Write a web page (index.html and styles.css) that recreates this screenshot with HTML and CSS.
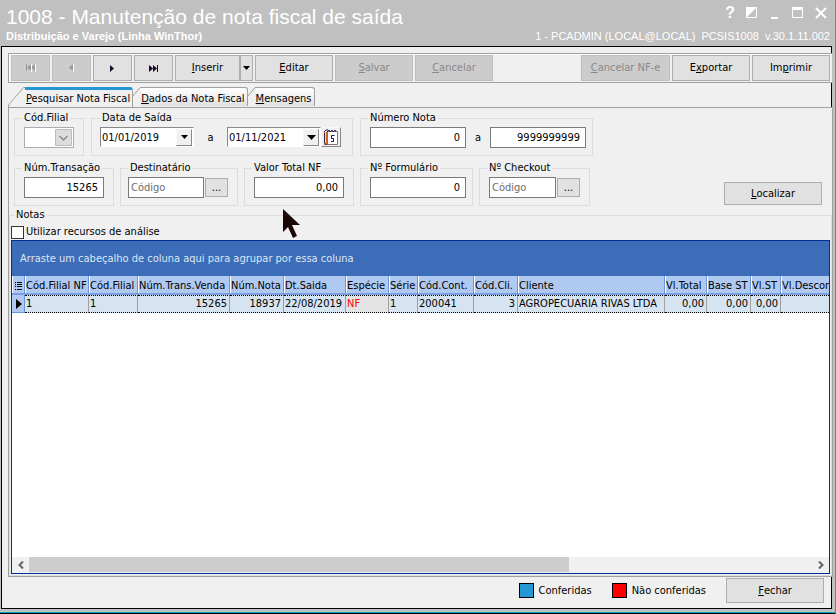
FILE: index.html
```html
<!DOCTYPE html>
<html lang="pt-BR">
<head>
  <meta charset="UTF-8">
  <title>1008 - Manutenção de nota fiscal de saída</title>
  <link rel="stylesheet" href="styles.css">
</head>
<body>
  <header class="titulo">
    <div class="linha">
      <h1>1008 - Manutenção de nota fiscal de saída</h1>
      <div class="janela">
        <button aria-label="Ajuda" class="ajuda">?</button>
        <button aria-label="Cores"><svg width="12" height="12"><path d="M0.500 0.500H10.500V10.500H0.500Z" fill="none" stroke="#fff"/><path d="M0 0H11L0 11Z" fill="#fff"/></svg></button>
        <button aria-label="Minimizar"><svg width="12" height="12"><path d="M2 10H9V12H2Z" fill="#fff"/></svg></button>
        <button aria-label="Maximizar"><svg width="12" height="12"><path d="M0 0H11V11H0ZM1 3V10H10V3Z" fill="#fff" fill-rule="evenodd"/></svg></button>
        <button aria-label="Fechar janela"><svg width="12" height="12"><path d="M1 1L11 11M11 1L1 11" stroke="#fff" stroke-width="2"/></svg></button>
      </div>
    </div>
    <div class="linha sub">
      <strong>Distribuição e Varejo (Linha WinThor)</strong>
      <div class="sessao"><span>1 - PCADMIN (LOCAL@LOCAL)</span><span>PCSIS1008</span><span>v.30.1.11.002</span></div>
    </div>
  </header>

  <main class="quadro">
    <div class="barra">
      <button class="nav" disabled aria-label="Primeiro"><svg width="10" height="8"><path d="M0 0H1V7H0ZM5 0V7L1 3.500ZM9 0V7L5 3.500Z" fill="#999"/><path d="M5.500 0V8M9.500 0V8" stroke="#fff"/></svg></button>
      <button class="nav" disabled aria-label="Anterior"><svg width="6" height="8"><path d="M4 0V7L0 3.500Z" fill="#999"/><path d="M4.500 0V8" stroke="#fff"/></svg></button>
      <button class="nav" aria-label="Próximo"><svg width="5" height="7"><path d="M0 0V7L4 3.500Z" fill="#1b0a2b"/></svg></button>
      <button class="nav" aria-label="Último"><svg width="10" height="7"><path d="M0 0V7L4 3.500ZM4 0V7L8 3.500ZM8 0H9V7H8Z" fill="#1b0a2b"/></svg></button>
      <div class="duplo">
        <button class="inserir"><u>I</u>nserir</button><button class="seta" aria-label="Opções de inserir"><svg width="7" height="4"><path d="M0 0H7L3.500 4Z"/></svg></button>
      </div>
      <button><u>E</u>ditar</button>
      <button disabled><u>S</u>alvar</button>
      <button disabled><u>C</u>ancelar</button>
      <button class="nfe" disabled><u>C</u>ancelar NF-e</button>
      <button>E<u>x</u>portar</button>
      <button>Im<u>p</u>rimir</button>
    </div>

    <div class="abas" role="tablist">
      <button class="aba ativa" role="tab" aria-selected="true"><svg width="17" height="20"><path d="M0 20V18L15 0H17V20Z" fill="#f0f0f0"/><path d="M0.500 20V18L15.500 0.500H17" fill="none" stroke="#a0a0a0"/></svg><span><u>P</u>esquisar Nota Fiscal</span></button>
      <button class="aba" role="tab" aria-selected="false"><svg width="8" height="20"><path d="M0 9L7 0.500H8" fill="none" stroke="#a0a0a0"/></svg><span><u>D</u>ados da Nota Fiscal</span></button>
      <button class="aba" role="tab" aria-selected="false"><svg width="8" height="20"><path d="M0 9L7 0.500H8" fill="none" stroke="#a0a0a0"/></svg><span><u>M</u>ensagens</span></button>
    </div>

    <section class="painel">
      <div class="filtros">
        <div class="grupos">
          <div class="grupo-linha topo">
            <fieldset>
              <legend>Cód.Filial</legend>
              <div class="campos">
                <div class="combo"><select aria-label="Cód.Filial" disabled><option></option></select><svg width="17" height="17"><path d="M0.500 0.500H16.500V16.500H0.500Z" fill="#ddd" stroke="#bbb"/><path d="M4.500 7L8.500 11L12.500 7" fill="none" stroke="#888" stroke-width="1.500"/></svg></div>
              </div>
            </fieldset>
            <fieldset class="datas">
              <legend>Data de Saída</legend>
              <div class="campos">
                <div class="data"><input type="text" value="01/01/2019" aria-label="Data inicial"><button aria-label="Abrir data inicial"><svg width="7" height="4"><path d="M0 0H7L3.500 4Z"/></svg></button></div>
                <span class="ate">a</span>
                <div class="data"><input type="text" value="01/11/2021" aria-label="Data final"><button aria-label="Abrir data final"><svg width="9" height="5"><path d="M0 0H9L4.500 5Z"/></svg></button></div>
                <button class="calendario" aria-label="Calendário"><svg width="16" height="17"><path d="M1 3H5V16H1Z" fill="#d2691e"/><path d="M2.500 3V15" stroke="#ffd0a0"/><path d="M4.500 2.500H14.500V15.500H4.500Z" fill="#fff" stroke="#777"/><path d="M4 3L6 1L7 3L9 1L10 3L12 1L13 3M1.500 4V14L4 16M1 3L3 1H5" fill="none" stroke="#302050"/><path d="M11.500 6.500H8.500V9.500H10.500V12.500H8" fill="none" stroke="#201040"/></svg></button>
              </div>
            </fieldset>
            <fieldset class="numero">
              <legend>Número Nota</legend>
              <div class="campos">
                <input class="medio" type="text" value="0" aria-label="Número inicial">
                <span class="ate">a</span>
                <input class="medio" type="text" value="9999999999" aria-label="Número final">
              </div>
            </fieldset>
          </div>
          <div class="grupo-linha">
            <fieldset>
              <legend>Núm.Transação</legend>
              <div class="campos"><input class="curto" type="text" value="15265" aria-label="Núm.Transação"></div>
            </fieldset>
            <fieldset class="destino">
              <legend>Destinatário</legend>
              <div class="campos"><input class="codigo" type="text" placeholder="Código" aria-label="Destinatário"><button class="busca" aria-label="Buscar destinatário">...</button></div>
            </fieldset>
            <fieldset>
              <legend>Valor Total NF</legend>
              <div class="campos"><input class="valor" type="text" value="0,00" aria-label="Valor Total NF"></div>
            </fieldset>
            <fieldset class="numero">
              <legend>Nº Formulário</legend>
              <div class="campos"><input class="medio" type="text" value="0" aria-label="Nº Formulário"></div>
            </fieldset>
            <fieldset>
              <legend>Nº Checkout</legend>
              <div class="campos"><input class="codigo menor" type="text" placeholder="Código" aria-label="Nº Checkout"><button class="busca" aria-label="Buscar checkout">...</button></div>
            </fieldset>
          </div>
        </div>
        <button class="localizar"><u>L</u>ocalizar</button>
      </div>

      <fieldset class="notas">
        <legend>Notas</legend>
        <label class="analise"><input type="checkbox"> Utilizar recursos de análise</label>
        <div class="grade">
          <div class="agrupar">Arraste um cabeçalho de coluna aqui para agrupar por essa coluna</div>
          <div class="dados">
            <table>
              <colgroup>
                <col class="c13"><col class="c64"><col class="c49"><col class="c92"><col class="c54"><col class="c62"><col class="c43"><col class="c29"><col class="c56"><col class="c44"><col class="c147"><col class="c42"><col class="c44"><col class="c30"><col>
              </colgroup>
              <thead>
                <tr>
                  <th><svg width="8" height="10"><path d="M0 1.500H1M2 1.500H7M0 3.500H1M2 3.500H7M0 5.500H1M2 5.500H7M0 8.500H1M2 8.500H7" stroke="#000"/></svg></th>
                  <th>Cód.Filial NF</th><th>Cód.Filial</th><th>Núm.Trans.Venda</th><th>Núm.Nota</th><th>Dt.Saida</th><th>Espécie</th><th>Série</th><th>Cód.Cont.</th><th>Cód.Cli.</th><th>Cliente</th><th>Vl.Total</th><th>Base ST</th><th>Vl.ST</th><th>Vl.Desconto</th>
                </tr>
              </thead>
              <tbody>
                <tr>
                  <td class="marca"><svg width="6" height="10"><path d="M0 0L6 5L0 10Z"/></svg></td>
                  <td>1</td><td>1</td><td class="num">15265</td><td class="num">18937</td><td>22/08/2019</td><td class="especie">NF</td><td>1</td><td>200041</td><td class="num">3</td><td>AGROPECUARIA RIVAS LTDA</td><td class="num">0,00</td><td class="num">0,00</td><td class="num">0,00</td><td></td>
                </tr>
              </tbody>
            </table>
          </div>
          <div class="rolagem">
            <button aria-label="Rolar à esquerda"><svg width="6" height="8"><path d="M5 0.500L1.500 4L5 7.500" fill="none" stroke="#666" stroke-width="2"/></svg></button>
            <div class="trilho"><div class="polegar"></div></div>
            <button aria-label="Rolar à direita"><svg width="6" height="8"><path d="M1 0.500L4.500 4L1 7.500" fill="none" stroke="#666" stroke-width="2"/></svg></button>
          </div>
        </div>
      </fieldset>
    </section>

    <footer class="rodape">
      <span class="legenda"><i class="azul"></i>Conferidas</span>
      <span class="legenda"><i class="vermelho"></i>Não conferidas</span>
      <button class="fechar"><u>F</u>echar</button>
    </footer>
  </main>

  <svg class="cursor" width="18" height="30"><path d="M0 0V23L5 18L10 29L14 27L9 16H17Z" fill="#1a0505"/></svg>
</body>
</html>
```
FILE: styles.css
```css
* {
  box-sizing: border-box;
}

body {
  margin: 0;
  height: 100vh;
  display: flex;
  flex-direction: column;
  background: #c0c0c0;
  border-right: 1px solid #18a8b8;
  border-bottom: 1px solid #000;
  box-shadow: inset 0 -1px #00a8c0;
  font: 11px/14px Tahoma, "DejaVu Sans Condensed", sans-serif;
  color: #000;
  overflow: hidden;
}

button, input, select {
  font: inherit;
  color: inherit;
  margin: 0;
}

button {
  display: flex;
  align-items: center;
  justify-content: center;
  padding: 0;
  background: #e1e1e1;
  border: 1px solid #adadad;
  white-space: pre;
}

button:disabled {
  background: #ccc;
  border-color: #bfbfbf;
  color: #888;
}

svg {
  display: block;
  flex: none;
}

/* barra de titulo */
.titulo {
  height: 46px;
  padding: 5px 5px 0 6px;
  color: #fff;
  font-family: "Liberation Sans", Arial, sans-serif;
}

.linha {
  display: flex;
  justify-content: space-between;
}

h1 {
  margin: 0;
  font-size: 21px;
  line-height: 24px;
  font-weight: normal;
}

.janela {
  display: flex;
  align-items: center;
  gap: 11px;
  height: 16px;
  padding-right: 3px;
}

.janela button {
  background: none;
  border: 0;
}

.janela .ajuda {
  font-size: 16px;
  font-weight: bold;
}

.sub {
  font-size: 11px;
}

.sessao {
  display: flex;
  gap: 6px;
}

/* quadro principal */
.quadro {
  flex: 1;
  min-height: 0;
  display: flex;
  flex-direction: column;
  margin: 0 3px 4px 1px;
  border: 1px solid #000;
  padding: 6px 0 0 6px;
  background: #f0f0f0;
}

.barra {
  display: flex;
  gap: 2px;
  height: 30px;
  margin-right: -1px;
  padding: 1px 2px;
  border: 1px solid #a0a0a0;
  border-right: 0;
  background: #f0f0f0;
  box-shadow: inset 1px 1px #fff;
}

.barra button {
  width: 78px;
  height: 26px;
}

.barra .nav {
  width: 39px;
}

.duplo {
  display: flex;
}

.barra .inserir {
  width: 65px;
}

.barra .seta {
  width: 13px;
}

.barra .nfe {
  width: 89px;
  margin-left: auto;
}

/* abas */
.abas {
  display: flex;
  height: 20px;
  margin-top: 4px;
}

.aba {
  height: 19px;
  border: 0;
  background: none;
  align-items: stretch;
}

.aba span {
  padding: 4px 2px 0 0;
  border: 1px solid #a0a0a0;
  border-left: 0;
  border-bottom: 0;
  border-radius: 0 3px 0 0;
  background: linear-gradient(#fff, #e0e0e0);
}

.aba.ativa {
  position: relative;
  height: 20px;
}

.aba.ativa span {
  padding: 2px 2px 0 1px;
  border-top: 3px solid #2497d4;
  background: #f0f0f0;
}

/* filtros */
.painel {
  flex: 1;
  min-height: 0;
  display: flex;
  flex-direction: column;
  margin-right: -2px;
  border: 1px solid #a0a0a0;
  background: #f0f0f0;
}

.filtros {
  display: flex;
  justify-content: space-between;
  align-items: flex-end;
  padding: 3px 10px 0 5px;
}

.grupos {
  display: flex;
  flex-direction: column;
  gap: 5px;
}

.grupo-linha {
  display: flex;
  gap: 6px;
}

.topo {
  gap: 7px;
}

fieldset {
  min-width: 0;
  height: 45px;
  margin: 0;
  padding: 0 9px;
  border: 1px solid #dcdcdc;
}

legend {
  height: 14px;
  margin-left: -2px;
  padding: 0 2px;
  white-space: nowrap;
}

.datas {
  width: 262px;
  padding-left: 8px;
}

.datas legend, .destino legend {
  margin-left: 0;
}

.destino {
  padding-left: 7px;
}

.numero {
  padding-right: 6px;
}

.campos {
  display: flex;
  align-items: flex-start;
  margin-top: 2px;
}

.campos input {
  height: 21px;
  padding: 0 5px;
  border: 1px solid #7a7a7a;
  background: #fff;
  text-align: right;
}

.campos .curto {
  width: 80px;
}

.campos .valor {
  width: 90px;
}

.campos .medio {
  width: 96px;
}

.campos .codigo {
  width: 76px;
  padding: 0 2px;
  text-align: left;
}

.campos .menor {
  width: 67px;
}

::placeholder {
  color: #6d6d6d;
}

.busca {
  width: 23px;
  height: 19px;
  margin: 1px 0 0 1px;
}

.combo {
  display: flex;
  align-items: center;
  width: 50px;
  height: 21px;
  padding-right: 1px;
  border: 1px solid #adadad;
  background: #fff;
}

.combo select {
  flex: 1;
  min-width: 0;
  border: 0;
  background: none;
  appearance: none;
}

.data {
  display: flex;
  align-items: center;
  width: 94px;
  height: 20px;
  padding-right: 1px;
  border: 1px solid #fff;
  border-top-color: #888;
  border-left-color: #888;
  background: #fff;
}

.campos .data input {
  flex: 1;
  min-width: 0;
  height: 18px;
  padding: 0 1px;
  border: 0;
  text-align: left;
}

.data button, .calendario {
  width: 16px;
  height: 17px;
  background: #f0f0f0;
  border-color: #f8f8f8 #888 #888 #f8f8f8;
}

.calendario {
  width: 20px;
  height: 20px;
}

.ate {
  width: 24px;
  line-height: 21px;
  text-align: center;
}

.datas .ate {
  width: 33px;
}

.localizar {
  width: 98px;
  height: 23px;
  margin-bottom: 1px;
}

/* notas */
.notas {
  display: flex;
  flex-direction: column;
  flex: 1;
  min-height: 0;
  height: auto;
  margin: 2px 0 0;
  padding: 0 1px 1px;
}

.notas legend {
  margin-left: 3px;
}

.analise {
  display: flex;
  align-items: center;
  gap: 2px;
  height: 14px;
  margin: 3px 0 1px;
}

.analise input {
  appearance: none;
  width: 13px;
  height: 13px;
  margin: 0;
  border: 1px solid #333;
  background: #fff;
}

.grade {
  flex: 1;
  min-height: 0;
  display: flex;
  flex-direction: column;
  border: 1px solid #002d96;
  background: #fff;
}

.agrupar {
  height: 35px;
  padding-left: 8px;
  line-height: 36px;
  background: #3d6db8;
  color: #dce6f5;
}

.dados {
  flex: 1;
  overflow: hidden;
}

table {
  width: 100%;
  table-layout: fixed;
  border-collapse: separate;
  border-spacing: 0;
}

th, td {
  padding: 0 1px;
  overflow: hidden;
  white-space: nowrap;
  text-align: left;
  font-weight: normal;
}

th {
  height: 19px;
  padding-top: 2px;
  border-right: 1px solid #6a94d8;
  border-bottom: 2px solid #7ba0e0;
  box-shadow: inset 1px 0 #fff;
  background: #b0c9f0;
}

td {
  height: 18px;
  border-right: 1px solid #a0a0a0;
  border-top: 1px dotted #000;
  border-bottom: 1px dotted #000;
  background: #d6e4f2;
}

th:first-child {
  padding-left: 3px;
}

.num {
  padding-right: 2px;
  text-align: right;
}

.marca {
  padding-left: 4px;
  border-top: 0;
  border-bottom: 1px solid #6a94d8;
  border-right-color: #6a94d8;
  background: #b0c9f0;
}

.especie {
  background: #e4e4e4;
  color: #f00;
}

th:last-child, td:last-child {
  border-right: 0;
}

.c13 { width: 13px; }
.c29 { width: 29px; }
.c30 { width: 30px; }
.c42 { width: 42px; }
.c43 { width: 43px; }
.c44 { width: 44px; }
.c49 { width: 49px; }
.c54 { width: 54px; }
.c56 { width: 56px; }
.c62 { width: 62px; }
.c64 { width: 64px; }
.c92 { width: 92px; }
.c147 { width: 147px; }

.rolagem {
  display: flex;
  height: 16px;
  padding-bottom: 1px;
  background: #f0f0f0;
}

.rolagem button {
  width: 17px;
  border: 0;
  background: none;
}

.trilho {
  flex: 1;
}

.polegar {
  width: 69%;
  height: 100%;
  background: #cdcdcd;
}

/* rodape */
.rodape {
  display: flex;
  justify-content: flex-end;
  align-items: flex-start;
  height: 31px;
  padding: 1px 7px 0 0;
}

.legenda {
  display: flex;
  align-items: center;
  gap: 5px;
  height: 25px;
  margin-right: 20px;
}

.legenda i {
  width: 15px;
  height: 15px;
  border: 1px solid #000;
}

.azul {
  background: #2497d4;
}

.vermelho {
  background: #f00;
}

.fechar {
  width: 98px;
  height: 25px;
}

.cursor {
  position: absolute;
  left: 283px;
  top: 209px;
}
```
